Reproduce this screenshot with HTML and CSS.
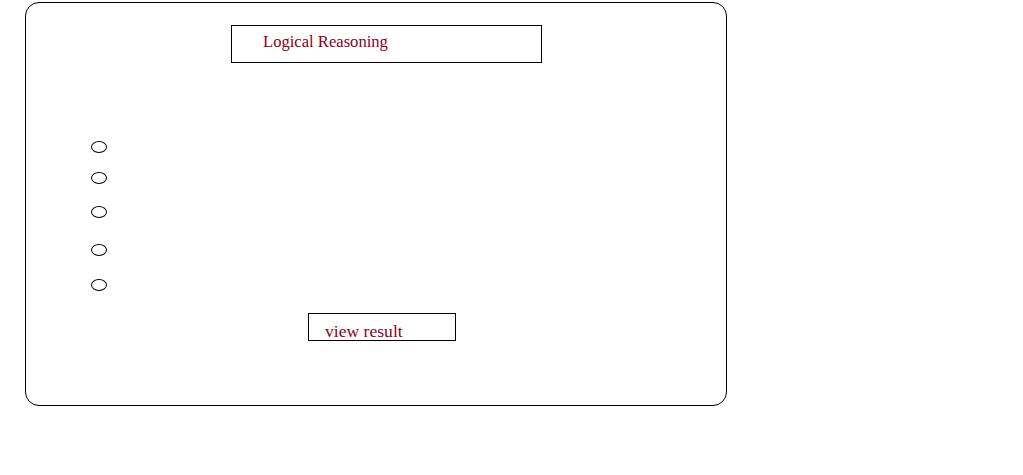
FILE: index.html
```html
<!DOCTYPE html>
<html>
<head>
<meta charset="utf-8">
<link rel="stylesheet" href="styles.css">
</head>
<body>
<div class="frame">
  <div class="title-box"><span class="title">Logical Reasoning</span></div>
  <div class="options">
    <div class="opt o1"><span class="radio"></span></div>
    <div class="opt o2"><span class="radio"></span></div>
    <div class="opt o3"><span class="radio"></span></div>
    <div class="opt o4"><span class="radio"></span></div>
    <div class="opt o5"><span class="radio"></span></div>
  </div>
  <div class="btn"><span class="btn-text">view result</span></div>
</div>
</body>
</html>
```

FILE: styles.css
```css
html, body { margin: 0; padding: 0; background: #fff; }
body { font-family: "Liberation Serif", "Times New Roman", serif; }
.frame {
  margin: 2px 0 0 25px;
  width: 700px;
  height: 402px;
  border: 1px solid #000;
  border-radius: 14px;
  display: flex;
  flex-direction: column;
  box-sizing: content-box;
}
.title-box {
  margin: 22px 0 0 205px;
  height: 36px;
  border: 1px solid #000;
  display: flex;
  align-items: center;
  padding-left: 31px;
  box-sizing: content-box;
  width: 278px;
}
.title { color: #8b0022; font-size: 16.6px; margin-bottom: 4px; }
.options { margin: 0 0 0 65px; display: flex; flex-direction: column; }
.opt { height: 12px; display: flex; }
.o1 { margin-top: 78px; }
.o2 { margin-top: 19px; }
.o3 { margin-top: 22px; }
.o4 { margin-top: 26px; }
.o5 { margin-top: 23px; }
.radio {
  width: 14px; height: 10px;
  border: 1px solid #000;
  border-radius: 50%;
}
.btn {
  margin: 22px 0 0 282px;
  width: 130px;
  height: 26px;
  border: 1px solid #000;
  padding-left: 16px;
  display: flex;
  align-items: flex-end;
}
.btn-text { color: #8b0022; font-size: 17.6px; line-height: 17px; margin-bottom: 0; }
```
